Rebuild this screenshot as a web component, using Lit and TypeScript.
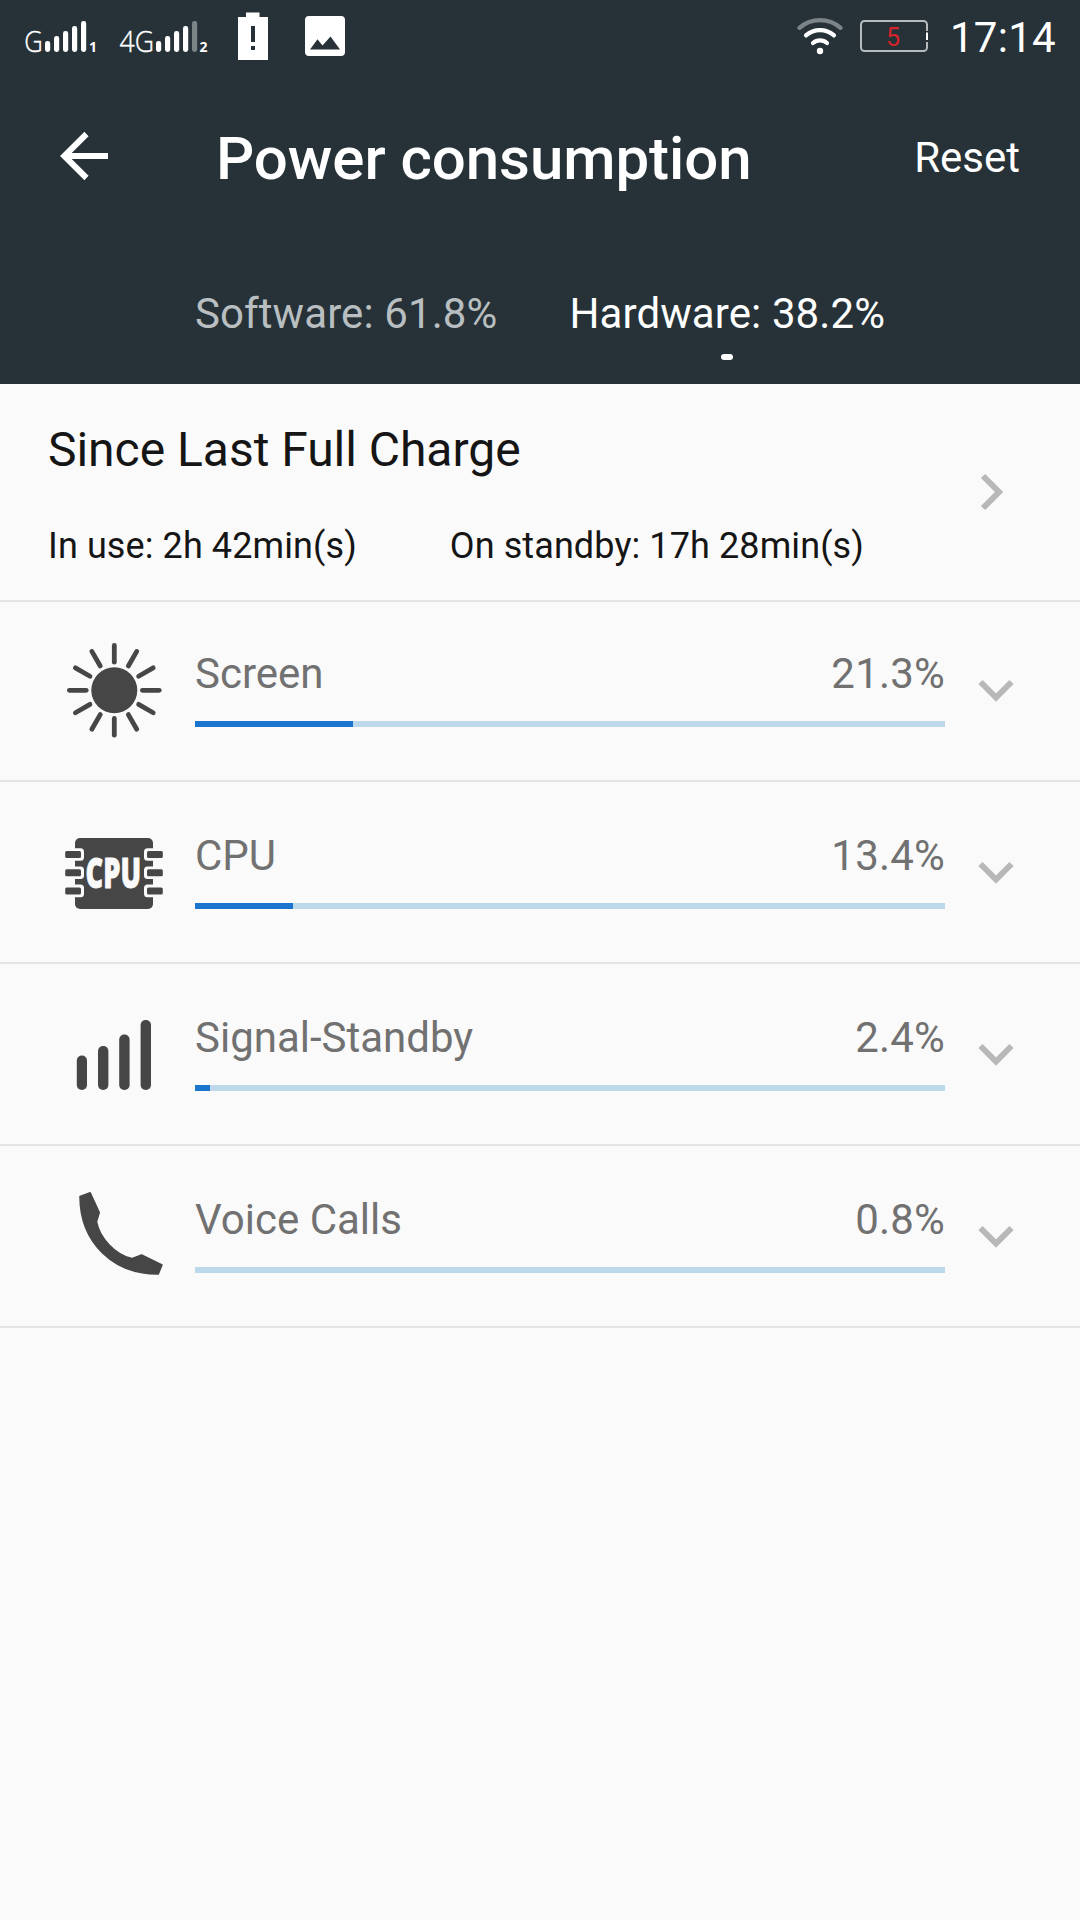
import { LitElement, html, css, svg, TemplateResult } from "lit";
import { customElement, property } from "lit/decorators.js";

interface Usage {
  name: string;
  percent: string;
  fill: number;
  icon: TemplateResult;
}

const sunIcon = svg`
  <circle cx="50.3" cy="49.3" r="23"></circle>
  ${Array.from(
    { length: 12 },
    (_, i) => svg`<path d="M50.3 21.2V4.4" fill="none" stroke="#464646" stroke-width="4.8" stroke-linecap="round" transform="rotate(${i * 30} 50.3 49.3)"></path>`
  )}`;

const cpuIcon = svg`
  <rect x="11" y="15" width="78" height="71" rx="5"></rect>
  ${[28, 46.2, 64.4].map(
    (y) => svg`
      <rect x="-6" y="${y - 2.8}" width="26" height="12.6" rx="3.5" fill="#fafafa"></rect>
      <rect x="80" y="${y - 2.8}" width="26" height="12.6" rx="3.5" fill="#fafafa"></rect>
      <rect x="1.2" y="${y}" width="15.8" height="7" rx="1.5"></rect>
      <rect x="83" y="${y}" width="15.8" height="7" rx="1.5"></rect>`
  )}
  <text x="21.500" y="64.700" textLength="55.500" lengthAdjust="spacingAndGlyphs" font-family="Open Sans, sans-serif" font-weight="800" font-size="42" fill="#fafafa" stroke="#fafafa" stroke-width="0.8" stroke-linejoin="round">CPU</text>`;

const signalIcon = svg`
  <rect x="12.8" y="50.5" width="10.2" height="34.5" rx="5"></rect>
  <rect x="34" y="41" width="10.4" height="44" rx="5"></rect>
  <rect x="55.2" y="29.5" width="10.4" height="55.5" rx="5"></rect>
  <rect x="76.6" y="15" width="10.4" height="70" rx="5"></rect>`;

const phoneIcon = svg`
  <path stroke="#464646" stroke-width="1.5" stroke-linejoin="round" d="M16 9.5L26.2 5.7 35.3 25.6 32.5 34.7C35.5 51 51 67.500 67.700 71.600L77.600 68 98 78 94.300 87C50 87.500 16 56 16 9.500Z"></path>`;

const usages: Usage[] = [
  { name: "Screen", percent: "21.3%", fill: 21, icon: sunIcon },
  { name: "CPU", percent: "13.4%", fill: 13, icon: cpuIcon },
  { name: "Signal-Standby", percent: "2.4%", fill: 2, icon: signalIcon },
  { name: "Voice Calls", percent: "0.8%", fill: 0, icon: phoneIcon },
];

@customElement("status-bar")
class StatusBar extends LitElement {
  static styles = css`
    :host { display: flex; justify-content: space-between; height: 72px; color: #fff; }
    svg { display: block; }
    .right { display: flex; }
    .clock { font-size: 42px; line-height: 50px; letter-spacing: 0.3px; padding: 13px 24px 0 0; }
  `;

  private bars(x: number, dim: number) {
    return [0, 1, 2, 3, 4].map(
      (i) => svg`<rect x="${x + i * 9}" y="${41 - i * 5}" width="5.2" height="${11 + i * 5}" rx="2.4" fill=${i === dim ? "#7b8487" : "#fff"}></rect>`
    );
  }

  render() {
    return html`
      <svg width="360" height="72" viewBox="0 0 360 72" fill="#fff">
        <g font-family="Open Sans" font-weight="300" font-size="29.500" stroke="#fff" stroke-width="0.4">
          <text x="24.300" y="52" textLength="18.500" lengthAdjust="spacingAndGlyphs">G</text>
          <text x="119.500" y="52" textLength="34.500" lengthAdjust="spacingAndGlyphs">4G</text>
        </g>
        ${this.bars(45, -1)}
        ${this.bars(156, 4)}
        <g font-family="Open Sans" font-weight="700" font-size="14">
          <text x="89" y="52">1</text>
          <text x="199.500" y="52">2</text>
        </g>
        <path fill-rule="evenodd" d="M246 12.500h13.500V17H268v43h-30V17h8zM251 26v16h4V26zM251 46v4h4v-4z"></path>
        <path fill-rule="evenodd" d="M309 16h32a4 4 0 0 1 4 4v32a4 4 0 0 1-4 4h-32a4 4 0 0 1-4-4V20a4 4 0 0 1 4-4zM310 49.500h30L330.500 36.500 322.500 45.500 317.500 39.300z"></path>
      </svg>
      <div class="right">
        <svg width="153" height="72" viewBox="797 0 153 72" fill="none" stroke-linecap="round" stroke-width="4.200">
          <path stroke="#7b8487" d="M799.500 27.800A31 31 0 0 1 840.500 27.800"></path>
          <path stroke="#fff" d="M806 35.400A21 21 0 0 1 834 35.400"></path>
          <path stroke="#fff" d="M813 43A10.600 10.600 0 0 1 827 43"></path>
          <circle cx="820" cy="51" r="3.200" fill="#fff"></circle>
          <rect x="861" y="21" width="66" height="30" rx="3.500" stroke="#b6bcbe" stroke-width="2"></rect>
          <path d="M927 31v11" stroke="#263238" stroke-width="3" stroke-linecap="butt"></path>
          <path d="M927 32.500v7.500" stroke="#fff" stroke-width="2" stroke-linecap="butt"></path>
          <text x="886" y="45.500" font-family="Roboto" font-size="25" fill="#d8232a">5</text>
        </svg>
        <span class="clock">17:14</span>
      </div>
    `;
  }
}

@customElement("usage-row")
class UsageRow extends LitElement {
  @property({ attribute: false }) usage!: Usage;

  static styles = css`
    :host {
      display: flex;
      align-items: flex-end;
      box-sizing: border-box;
      height: 182px;
      padding: 0 62px 0 64px;
      border-bottom: 2px solid #e5e5e5;
      color: #717171;
    }
    .icon { display: block; overflow: visible; margin: 0 31px 39px 0; }
    .body { width: 750px; padding-bottom: 53px; }
    .labels { display: flex; justify-content: space-between; font-size: 42px; line-height: 50px; margin-bottom: 22px; }
    .percent { letter-spacing: 0.2px; }
    .track { height: 6px; background: #bdd7eb; }
    .fill { height: 6px; background: #1b74cd; }
    .chevron { display: block; margin: 0 0 77px 31px; }
  `;

  render() {
    const u = this.usage;
    return html`
      <svg class="icon" width="100" height="100" viewBox="0 0 100 100" fill="#464646">${u.icon}</svg>
      <div class="body">
        <div class="labels"><span>${u.name}</span><span class="percent">${u.percent}</span></div>
        <div class="track"><div class="fill" style="width:${u.fill}%"></div></div>
      </div>
      <svg class="chevron" width="40" height="24" viewBox="0 0 40 24" fill="none" stroke="#b8b8b8" stroke-width="6">
        <path d="M4.500 3L20 18.500 35.500 3"></path>
      </svg>
    `;
  }
}

@customElement("app-root")
class AppRoot extends LitElement {
  static styles = css`
    :host {
      display: block;
      min-height: 1920px;
      background: #fafafa;
      font-family: Roboto, "Liberation Sans", sans-serif;
    }
    .header { height: 384px; background: #263238; color: #fff; }
    .toolbar { display: flex; align-items: center; height: 168px; padding: 0 60px; box-sizing: border-box; }
    .back { display: block; margin: 0 108px 0 0; }
    .title { flex: 1; margin: 0; font-size: 60px; font-weight: 500; line-height: 72px; letter-spacing: -0.05px; padding-top: 6px; }
    .reset { font-size: 42px; line-height: 50px; padding-top: 4px; }
    .tabs { display: flex; justify-content: center; gap: 72px; padding-top: 49px; }
    .tab { display: flex; flex-direction: column; align-items: center; gap: 15px; font-size: 42px; line-height: 50px; letter-spacing: 0.1px; color: #b9bfc0; }
    .tab.active { color: #fff; }
    .dot { width: 12px; height: 6px; border-radius: 3px; background: #fff; }
    .summary { display: flex; align-items: center; justify-content: space-between; height: 218px; box-sizing: border-box; padding: 0 72px 0 48px; border-bottom: 2px solid #e5e5e5; color: #151515; }
    .info { padding-top: 5px; }
    .heading { font-size: 48px; line-height: 56px; letter-spacing: -0.03px; margin-bottom: 47px; }
    .times { display: flex; gap: 93px; font-size: 36px; line-height: 42px; letter-spacing: 0.1px; }
    .next { display: block; }
    .list { display: block; margin-top: -2px; }
  `;

  render() {
    return html`
      <div class="header">
        <status-bar></status-bar>
        <div class="toolbar">
          <svg class="back" width="48" height="50" viewBox="0 0 48 50" fill="none" stroke="#fff" stroke-width="6">
            <path d="M26.500 3L4.300 25 26.500 47M4 25H48"></path>
          </svg>
          <h1 class="title">Power consumption</h1>
          <span class="reset">Reset</span>
        </div>
        <div class="tabs">
          <div class="tab">Software: 61.8%</div>
          <div class="tab active">Hardware: 38.2%<span class="dot"></span></div>
        </div>
      </div>
      <div class="summary">
        <div class="info">
          <div class="heading">Since Last Full Charge</div>
          <div class="times"><span>In use: 2h 42min(s)</span><span>On standby: 17h 28min(s)</span></div>
        </div>
        <svg class="next" width="28" height="40" viewBox="0 0 28 40" fill="none" stroke="#b8b8b8" stroke-width="6">
          <path d="M3 4L19 20 3 36"></path>
        </svg>
      </div>
      <div class="list">
        ${usages.map((u) => html`<usage-row .usage=${u}></usage-row>`)}
      </div>
    `;
  }
}
